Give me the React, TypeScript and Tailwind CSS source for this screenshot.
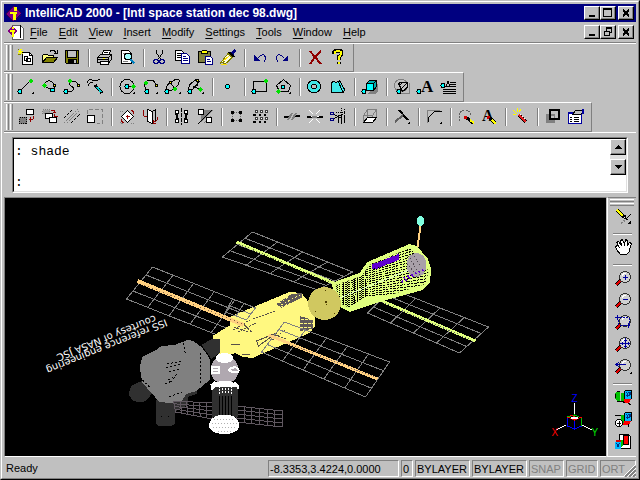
import React from "react";

type P = { children?: React.ReactNode };

const L = ({ d, s = "#000", f = "none", w = 1, dash }: { d: string; s?: string; f?: string; w?: number; dash?: string }) => (
  <path d={d} stroke={s} fill={f} strokeWidth={w} strokeDasharray={dash} />
);
const Cy = ({ x, y }: { x: number; y: number }) => <circle cx={x} cy={y} r={2} fill="#00ffff" stroke="#000" />;
const Gr = ({ x, y }: { x: number; y: number }) => (
  <path d={`M${x} ${y - 2.5}L${x + 2.5} ${y}L${x} ${y + 2.5}L${x - 2.5} ${y}Z`} fill="#00e000" />
);
const Ye = ({ x, y }: { x: number; y: number }) => (
  <rect x={x - 1} y={y - 1} width={2} height={2} fill="#ffff00" stroke="#000" />
);
const Fly = () => <path d="M20 15v3h-3z" fill="#000" />;

const icons: Record<string, React.ReactNode> = {
  New: <>
    <L d="M8.5 5.5h7l3 3v9h-10z" f="#fff" /><L d="M15.5 5.5v3h3" />
    <L d="M10.5 9.5h3v4h-3zM12.5 11.5h4v3h-4z" />
    <L d="M4 4.5h5M6.5 2v5M4 2l5 5M8 2l-4 5" s="#ffff00" /><L d="M4 7.5h3M4 2.5h1" s="#808000" />
  </>,
  Open: <>
    <L d="M5.5 15.5v-7l1-1h4l1 1h5v2" f="#ffff80" /><L d="M5.5 15.5l4-5h11l-4 5z" f="#808000" />
    <L d="M13 4.5q3-3 6 1M20 3v3.5h-3.5" />
  </>,
  Save: <>
    <L d="M5.5 3.5h13v13h-12l-1-1z" f="#808000" /><path d="M8 4h8v6H8z" fill="#c0c0c0" /><path d="M8 12h9v5H8z" fill="#000" />
    <path d="M14 13h2v3h-2z" fill="#c0c0c0" /><L d="M7.5 4v6.5h9V4" />
  </>,
  Print: <>
    <L d="M9.5 8.5l2-5h7l-2 5" f="#fff" /><L d="M12 5.5h4M11 7.5h4" />
    <L d="M5.5 10.5l3-3h11v5l-3 3h-11z" f="#c0c0c0" /><L d="M5.5 10.5h11v5M16.5 10.5l3-3M6 12.5h10" />
    <L d="M8.5 14.5h9l-1.5 3H8.5z" f="#fff" /><path d="M11 11h2v1h-2z" fill="#ff0" />
  </>,
  "Print Preview": <>
    <L d="M6.5 3.5h7l3 3v10h-10z" f="#fff" /><L d="M8 6.5h4M8 14.5h5" s="#808080" />
    <circle cx={13} cy={9.5} r={3.5} fill="#a0ffff" stroke="#000" /><L d="M15.5 12l4 4.5" s="#0080c0" w={2} />
  </>,
  Cut: <>
    <L d="M9.5 3v3l4 6M15.5 3v3l-4 6" /><circle cx={9} cy={14.5} r={2.3} fill="none" stroke="#000080" />
    <circle cx={15} cy={14.5} r={2.3} fill="none" stroke="#000080" />
  </>,
  Copy: <>
    <L d="M5.5 3.5h6l2 2v8h-8z" f="#fff" /><L d="M7 6.5h4M7 8.5h5M7 10.5h5" />
    <L d="M11.5 6.5h5l3 3v6.500h-8z" f="#fff" s="#000080" /><L d="M13 9.5h3M13 11.5h5M13 13.5h5" s="#000080" />
  </>,
  Paste: <>
    <L d="M5.5 4.5h12v11h-12z" f="#808040" /><L d="M8.5 6.5v-2l2-1.5h2l2 1.5v2z" f="#ffff00" />
    <L d="M12.5 9.5h5l2 2v6h-7z" f="#fff" s="#000080" /><L d="M14 12.5h3M14 14.5h4" s="#000080" />
  </>,
  "Match Properties": <>
    <L d="M16 7l3.5-4" s="#000080" w={3} /><L d="M12.5 5l6 5" w={2} />
    <L d="M12 6.5l4 4-5 5-4 2 1-3-4 2 4-5z" f="#ffffe0" s="#808000" /><L d="M5 17.5h6M7 14l6-5" s="#ffe000" />
  </>,
  Undo: <><L d="M10 11q3-4 6-3q3 3 0 7" s="#000080" /><path d="M6 8v6h6z" fill="#000080" /></>,
  Redo: <><L d="M13 11q-3-4-6-3q-3 3 0 7" s="#000080" /><path d="M17 8v6h-6z" fill="#000080" /></>,
  Delete: <><L d="M7 4l4 5 7 8M18 4q-6 5-11 13" s="#900000" w={2} /></>,
  Help: <>
    <L d="M8 7q0-3.500 4-3.500t3.500 3q0 2-3 3.500v3M12.5 15v2" w={4} /><L d="M8.5 7q0-3 3.500-3t3 2.500q0 2-2.500 3.500v3M12.5 15v2" s="#ffff00" w={2} />
  </>,
  Line: <><L d="M6 15L16 5" /><Cy x={6} y={15.5} /><Gr x={16.5} y={5} /><Fly /></>,
  Arc: <><L d="M7 9q2-5 6-4q5 1 4 8M7 10l8 4" /><Gr x={7} y={9.5} /><Ye x={17} y={9} /><Cy x={15.5} y={14} /></>,
  Polyline: <><L d="M6 15.5h5q5-2 1-5q-4-2-1-5h4q3 1 3 4" /><Cy x={6} y={15.5} /><Gr x={9.5} y={5} /><Ye x={18} y={9} /></>,
  Freehand: <><L d="M4 7q2-5 5-3t8-1M5 10q0-3 5-4" /><L d="M12 9l7 8" w={3} /><L d="M14 11l4 5" s="#00d0d0" w={2} /></>,
  Circle: <><circle cx={12} cy={10.5} r={7} fill="none" stroke="#000" /><L d="M12 10.500h6" /><Cy x={12} y={10.5} /><Gr x={18} y={10.5} /><Fly /></>,
  "Three Point Arc": <><L d="M8 13q-4-5 1-8q7-3 9 4" /><Gr x={8} y={7} /><Ye x={18} y={9} /><Cy x={9} y={15.5} /><Fly /></>,
  Ellipse: <><L d="M6 14q-2-4 4-8t8-2q1 4-4 8t-8 2M9 6l5 7" /><Ye x={9} y={6} /><Cy x={6} y={15.5} /><Gr x={14} y={13} /><Fly /></>,
  "Elliptical Arc": <><L d="M5 13q-1-4 4-7l4-3M7 15l9-10M13 4v6M9 10l6 3" /><Ye x={13} y={4} /><Gr x={16} y={13.5} /><Cy x={6} y={15.5} /><Fly /></>,
  Point: <Cy x={11.5} y={10.5} />,
  Rectangle: <><L d="M5.5 5.5h13v10h-13z" /><Cy x={6} y={15.5} /><Gr x={18} y={5} /></>,
  Polygon: <><L d="M12.5 3.5l7 6-2 6h-9l-3-6z" /><Cy x={12} y={11} /><Gr x={7.5} y={15.5} /><Fly /></>,
  Donut: <><circle cx={11} cy={10.5} r={6.5} fill="#40e8e8" stroke="#000" /><circle cx={11} cy={10.5} r={2.5} fill="#c0c0c0" stroke="#000" /></>,
  Plane: <><L d="M5.5 6.5l2-1 3 1 3-2 5 9-1 3h-12z" f="#40e8e8" /><L d="M12 5l5 11" /></>,
  Box: <><path d="M18 8h2v7l-3 3h-7z" fill="#808080" /><L d="M8.5 7.5l3-3h7v6l-3 4h-7z" f="#00b0b0" /><L d="M8.5 7.5h7v7h-7z" f="#00ffff" /><L d="M15.5 7.5l3-3" /><Cy x={6} y={15.5} /></>,
  Hatch: <><circle cx={11} cy={9.5} r={6.5} fill="none" stroke="#808080" /><L d="M9 17.5h10.500v-11" s="#808080" /><L d="M8.5 7.5l2-1h7v5l-5 4z" /><L d="M9 10l3-3M11 13l6-6M13 15l4-4" /><Cy x={9} y={15.5} /></>,
  Text: <><text x={8} y={16} fontSize={17} fontWeight={700} fontFamily="'Liberation Serif', serif">A</text><Cy x={6} y={15.5} /></>,
  "Multiline Text": <><L d="M14 6.5h6M14 8.5h6M15 10.5h5M7 13.5h13M7 15.5h13M7 17.5h13M8 10.5h7" /><L d="M10 11l2-6 2 6" /><Cy x={7} y={9.5} /></>,
  Move: <><L d="M12.5 3.5h7v5h-7z" f="#fff" /><path d="M5 11h8v7H5z" fill="#808080" /><L d="M5.5 11.500h7v6h-7z" dash="1 1" /><L d="M15 13.5h4M16.500 11v5M19 13V10" s="#900000" /></>,
  "Copy Objects": <><L d="M5.500 3.500h7v4h-7z" f="#a0a0a0" s="#808080" dash="1 1" /><L d="M8.500 7.500h7v5h-7z" f="#fff" /><L d="M12.500 11.500h7v5h-7z" f="#fff" /><L d="M14 4.500h3v2M17 7.500v3M15.500 6.500h3M18 10.500h3" s="#900000" /></>,
  Parallel: <><L d="M4 12l8-8M11 17l9-9" dash="3 1" /><L d="M4 17L18 3M7 17L19 5" s="#808080" dash="2 1" /></>,
  Scale: <><L d="M4.500 8v-4.500h15v14h-6" s="#808080" dash="4 2" /><L d="M4.500 9.500h7v7h-7z" f="#fff" /></>,
  Rotate: <><L d="M6.500 10.500l6-6 6 6-6 6z" f="#fff" /><L d="M5 5h4M16 17h4M5 16l3 2" s="#808080" dash="1 1" /><L d="M12.500 8.500v4M10.500 10.500h4M16 4q3 1 3 4M6 13q0 3 3 4" s="#900000" /></>,
  "Rotate 3D": <><L d="M9.500 3.500l5 2v12l-5-2z" f="#fff" /><L d="M14.500 5.500l3-2v11" /><L d="M5 4v4q0 3 4 3M19 11q2 3-3 5M18 17h-3v-3" s="#900000" /></>,
  Mirror: <><L d="M11.500 2v17" dash="4 1" /><L d="M5.500 4.500h3v3h-2v5h2v4h-3v-3h2v-5h-2zM17.500 4.500h-3v3h2v5h-2v4h3v-3h-2v-5h2z" f="#fff" /></>,
  "Mirror 3D": <><path d="M8 4h12L8 16zM9 18l9-9v5z" fill="#808080" /><circle cx={8} cy={6} r={3} fill="#fff" stroke="#000" /><circle cx={16} cy={14} r={3} fill="#fff" stroke="#000" /><L d="M5 18L19 4" /></>,
  Array: <><path d="M6 5h3v3H6zM14 5h3v3h-3zM6 13h3v3H6zM14 13h3v3h-3z" /><L d="M7.5 8v5M15.5 8v5M9 6.5h5M9 14.5h5" s="#606060" dash="1 1" /></>,
  "3D Array": <><path d="M5 8h3v2H5zM11 8h2v2h-2zM16 8h2v2h-2zM5 15h3v2H5zM11 15h2v2h-2zM16 15h2v2h-2z" /><L d="M7.5 4.5h2v2h-2zM12.500 4.500h2v2h-2zM17.500 4.500h2v2h-2zM7.500 11.500h2v2h-2zM12.500 11.500h2v2h-2zM17.500 11.500h2v2h-2z" f="#fff" s="#404040" /></>,
  Break: <><L d="M4 11h5M15 10h5" w={2} /><L d="M8 14l4-7M12 14l4-7" s="#808080" w={2} /></>,
  Join: <><L d="M4 10.500h16" w={2} /><L d="M6 4l4 4M17 4l-4 4M6 17l4-4M17 17l-4-4M8 10.500h8" s="#fff" /><L d="M9 11h5" s="#808080" w={2} /></>,
  Trim: <><L d="M7 13l10-5M7 8l8 4M12.500 9v8M15.500 9v9M18.500 9v8" /><L d="M10 6.500h10M15.500 2v5M18.500 3v5" dash="1 1" /><circle cx={6} cy={7.5} r={1.5} fill="none" stroke="#000080" /><circle cx={6} cy={13.5} r={1.5} fill="none" stroke="#000080" /></>,
  Extrude: <><L d="M5.5 9.5l4-6h9v8l-4 5h-9zM9.5 3.5v8M5.5 9.5h9v7M14.5 9.5l4-6" s="#808080" /><L d="M5.5 16.5l4-5h9l-4 5z" f="#fff" /></>,
  Extend: <><L d="M9 4l9 10" w={2} /><L d="M5 16l8-7" s="#606060" w={2} /><Fly /></>,
  Chamfer: <><L d="M5.500 17V4.500h12" s="#808080" /><L d="M6 16v-4l7-7h7" /><Fly /></>,
  "Edit Polyline": <><L d="M5 15V8q2-4 6-4 5 0 6 5" s="#606060" dash="2 1" /><path d="M10 10h3v3h-3z" fill="#d00000" /><L d="M13 12l6 5" w={3} /><L d="M16 14l4 3" s="#ffff00" w={2} /></>,
  "Edit Text": <><text x={5} y={15} fontSize={16} fontWeight={700} fontFamily="'Liberation Serif', serif">A</text><path d="M10 10h3v3h-3z" fill="#d00000" /><L d="M13 12l5 5" w={3} /><L d="M15 14l4 4" s="#ffff00" w={2} /></>,
  Explode: <><L d="M10 9l7 7" w={4} /><L d="M10 9l7 7" s="#e02020" w={2} /><L d="M11 8l6 7" s="#fff" dash="1 2" /><L d="M4 4l4 4M8 2v4M4 9l3-1M12 3l-2 3" s="#ffff00" /></>,
  "Draw Order": <><path d="M5 8h9v9H5z" fill="#808080" /><path d="M9 10h4v3H9z" fill="#c0c0c0" /><L d="M9 4h9v9H9z" w={2} /></>,
  Properties: <><L d="M4.500 6.500h13v11h-13z" f="#fff" s="#0000a0" /><path d="M4 6h8v2H4z" fill="#0000a0" /><L d="M6 11.500h2M10 11.500h5M6 13.500h2M10 13.500h5M6 15.500h2M10 15.500h5" /><L d="M9 8l3-4h6l1 2-2 2h-4z" f="#c0c0c0" /><path d="M18 3h2v5h-2z" fill="#0000a0" /></>,
  Sketch: <><L d="M6 4l7 7" w={4} /><L d="M6 4l6 6" s="#ffff00" w={2} /><path d="M11 11l3-2 1 4z" fill="#fff" stroke="#000" /><L d="M15 13l5-5M13 10l4 4" /><L d="M10 17l5-3" s="#808080" w={2} dash="2 1" /><path d="M20 14v4h-4z" /></>,
  Pan: <L d="M9.5 17.5l-4-5-1-3 2-1 2 2-3-5 2-1 3 4-1-5 2-1 2 5 1-5 2 1 0 5 2-3 2 1-2 6v2l-3 3z" f="#fff" />,
};

const lens = <><L d="M5 17l5-5" w={3} /><L d="M5 17l4-4" s="#e00000" w={2} /><circle cx={14} cy={9} r={5.5} fill="#d0d0d0" stroke="#303030" /><L d="M11 8q1-3 4-3" s="#fff" /></>;
const cam = <><path d="M14 4h7v8h-7z" fill="#00b8ff" /><L d="M15 5l5 6M18 5l2 3M15 8l3 3M20 5l-5 6M18 5l-3 3" s="#003080" dash="1 1" /><L d="M13.500 4v8M14 3.500h7M20.500 4v8" /><path d="M13 12h7l-2 4h-6z" fill="#ff0000" /><path d="M10 6h3v8h-3z" fill="#00c000" /></>;
Object.assign(icons, {
  "Zoom In": <>{lens}<L d="M12 9.500h5M14.500 7v5" s="#0000a0" /></>,
  "Zoom Out": <>{lens}<L d="M12 9.500h5" s="#0000a0" /></>,
  "Zoom Window": <>{lens}<L d="M4 5.500h5M6.500 3v5" s="#0000a0" /><L d="M14 13.500h6M17.500 11v5M9 5.500h9v7M7.500 8v5h7" s="#0000a0" dash="2 1" /></>,
  "Zoom Extents": <>{lens}<L d="M9 9.500h10M14.500 4v10M11.500 8v3M17.500 8v3M13 6.500h3M13 12.500h3" s="#0000a0" /></>,
  "Zoom Previous": <>{lens}<L d="M5 8.500h10M8 6l-3 2.500 3 2.500" s="#0000a0" /><path d="M21 15v3h-3z" /></>,
  Render: <>{cam}<path d="M4 9q0-5 5-5v10q-5 0-5-5z" fill="#00c000" /><L d="M4.500 7v4M6 5l3-1M6 14h5l3 2M17 16l3 2" /></>,
  Lights: <>{cam}<L d="M4 6.500h6M17 15v3" /><circle cx={8} cy={14} r={3.5} fill="#fff" stroke="#000" /><L d="M6 14.500h4M8.500 12v5" /></>,
  Materials: <><path d="M8 3h9l2 2v12H8z" fill="#fff" stroke="#000" /><path d="M12 4h5v9h-5z" fill="#ff0000" stroke="#000" /><path d="M4 11h6v7H4z" fill="#00b8ff" /><L d="M5 12l4 5M9 12l-4 5" s="#003080" dash="1 1" /><path d="M10 9h2v5l-2 3z" fill="#00c000" /><path d="M5 9h5v2H5z" fill="#e00000" /></>,
});

const Tool = ({ name }: { name: string }) => (
  <button type="button" aria-label={name} title={name} className="flex h-[22px] w-[23px] shrink-0 items-center justify-center">
    <svg width="23" height="22" viewBox="0 0 23 22" shapeRendering="crispEdges" aria-hidden="true">{icons[name]}</svg>
  </button>
);

const Bar = ({ groups, first }: { groups: string[][]; first?: boolean }) => (
  <div role="toolbar" className={`flex w-fit items-stretch border-r border-b border-r-[#808080] border-b-[#808080] ${first ? "h-[28px]" : "h-[30px] border-t border-t-white"}`}>
    <div className="flex shrink-0 gap-px py-px pr-px pl-0.5">
      <i className="w-[3px] border-r border-l border-r-[#808080] border-l-white" />
      <i className="w-[3px] border-r border-l border-r-[#808080] border-l-white" />
    </div>
    <div className="flex items-center pr-1">
      {groups.map((g, i) => (
        <React.Fragment key={i}>
          {i > 0 && <i className="mr-0.5 ml-[5px] h-[18px] w-0.5 shrink-0 border-r border-l border-r-white border-l-[#808080]" />}
          {g.map((n) => <Tool key={n} name={n} />)}
        </React.Fragment>
      ))}
    </div>
  </div>
);

const bevel = "border border-t-white border-l-white border-r-black border-b-black bg-[#c0c0c0] shadow-[inset_-1px_-1px_0_#808080]";

const WinBtn = ({ label, children }: P & { label: string }) => (
  <button type="button" aria-label={label} className={`flex h-[14px] w-4 items-center justify-center ${bevel}`}>
    <svg width="12" height="10" viewBox="0 0 12 10" shapeRendering="crispEdges" aria-hidden="true">{children}</svg>
  </button>
);
const WinButtons = ({ child }: { child?: boolean }) => (
  <div className="flex pr-0.5">
    <WinBtn label="Minimize"><path d="M3 7h6v2H3z" /></WinBtn>
    {child ? (
      <WinBtn label="Restore"><L d="M4.500 4V1.500h5v4H8" /><L d="M4 1h6" w={2} /><L d="M2.500 4.500h5v4h-5zM2 4h6" /></WinBtn>
    ) : (
      <WinBtn label="Maximize"><L d="M1.500 1.500h8v7h-8z" /><path d="M1 0h9v2H1z" /></WinBtn>
    )}
    <span className="w-0.5" />
    <WinBtn label="Close"><L d="M3 1.500l6 7M9 1.500l-6 7" w={2} /></WinBtn>
  </div>
);

const Logo = ({ size }: { size: number }) => (
  <svg width={size} height={size} viewBox="0 0 16 16" shapeRendering="crispEdges" aria-hidden="true">
    <path d="M8 0l8 8-8 8-8-8z" fill="#800080" stroke="#400040" />
    <path d="M8 1h4v4H8zM4 6h8v3h-1v6H7V9H4z" fill="#ffff00" />
  </svg>
);

type Pt = [number, number];
const mix = (a: Pt, b: Pt, t: number): Pt => [a[0] + (b[0] - a[0]) * t, a[1] + (b[1] - a[1]) * t];
const Mesh = ({ q, nu, nv, color = "#808080" }: { q: [Pt, Pt, Pt, Pt]; nu: number; nv: number; color?: string }) => {
  const seg = (a: Pt, b: Pt) => `M${a[0]} ${a[1]}L${b[0]} ${b[1]}`;
  let d = "";
  for (let i = 0; i <= nu; i++) d += seg(mix(q[0], q[1], i / nu), mix(q[3], q[2], i / nu));
  for (let j = 0; j <= nv; j++) d += seg(mix(q[0], q[3], j / nv), mix(q[1], q[2], j / nv));
  return <path d={d} stroke={color} fill="none" />;
};

const hull = "M332 283L360 273 368 262 410 244 417 246 428 258 432 270 430 283 423 290 380 302 350 312 337 305Z";
const meshLines = Array.from({ length: 17 }, (_, i) => `M336 ${283 + i * 2}L366 ${264 + i * 2}L432 ${242 + i * 3}`).join("");

const Station = () => (
  <svg className="block h-full w-full" viewBox="5 198 602 258" preserveAspectRatio="xMidYMid slice" shapeRendering="crispEdges" role="img" aria-label="Space station model">
    <Mesh q={[[253, 232], [353, 272], [318, 290], [223, 257]]} nu={4} nv={4} />
    <Mesh q={[[392, 289], [489, 327], [460, 353], [368, 313]]} nu={4} nv={4} />
    <L d="M237 242L334 283" s="#e0ff7e" w={3} /><L d="M240 244L334 284" s="#607030" dash="1 2" />
    <L d="M380 300L476 341" s="#e0ff7e" w={3} /><L d="M380 301L470 339" s="#606060" dash="1 2" />
    <Mesh q={[[153, 267], [256, 308], [233, 341], [127, 299]]} nu={5} nv={4} />

    <path d={hull} fill="#e0ff7e" />
    <clipPath id="hull"><path d="M336 285L362 276 370 265 410 248 424 259 429 272 426 284 378 299 350 308 340 303Z" /></clipPath>
    <g clipPath="url(#hull)">
      <path d={meshLines} stroke="#000" fill="none" strokeDasharray="3 1 2 1" />
      <L d="M350 279l9 28M364 271l9 29M380 262l11 34M396 254l11 34" s="#e0ff7e" />
      <L d="M340 298L412 269" s="#e0ffc0" />
    </g>
    <ellipse cx={417} cy={265} rx={10} ry={12} fill="#a8a0a8" />
    <L d="M409 256l12 20M413 254l12 18M408 264l10 13" s="#504850" dash="1 2" />
    <L d="M404 278l20-8M402 282l12-6" s="#6000d0" w={2} dash="2 2" />
    <path d="M372 264l5 -1 22-9v6l-22 9h-4z" fill="#6000d0" /><L d="M373 264l26-10M375 269l22-8" dash="1 3" />
    <L d="M418 247L421 226" s="#ffd080" w={2} /><ellipse cx={421} cy={221} rx={4} ry={5} fill="#80ffe0" />

    <path d="M213 336L231 325 230 317 290 292 302 293 310 303 316 317 315 327 310 333 253 358 243 357 236 353 222 357 216 348Z" fill="#fff880" />
    <path d="M277 304l15-10 10-1 1 4-21 11z" fill="#605858" /><L d="M278 307l22-12M282 307l20-8M280 303l10-7" s="#fff880" dash="2 2" />
    <path d="M300 316l14 4-1 9-13 2z" fill="#605858" /><L d="M301 319h12M300 323h14M300 327h12" s="#fff880" dash="3 1" />
    <L d="M234 330l16-10M239 332l17-9M244 324l8 8M235 327l14 5M254 319l21-8M273 340l12-10M276 335l10 4" s="#585048" dash="2 1" />
    <L d="M257 341l20-8-18 13zM242 354l8 1M231 344h9" s="#585048" />
    <Mesh q={[[233, 299], [256, 308], [247, 320], [226, 312]]} nu={2} nv={2} />
    <Mesh q={[[285, 322], [390, 362], [366, 397], [262, 352]]} nu={5} nv={4} />
    <L d="M138 281L244 325" s="#ffd080" w={4} /><L d="M145 285L248 326" s="#806040" dash="1 3" />
    <L d="M269 335L378 379" s="#ffd080" w={3} /><L d="M290 344L375 377" s="#806860" dash="1 2" />
    <circle cx={325} cy={303.5} r={16.5} fill="#d0c860" /><path d="M325 301h2v2h-2zM326 304h1v1h-1zM325 290h1v1h-1zM315 311h1v1h-1zM334 313h1v1h-1z" fill="#504000" />

    <path d="M202 345l10-6h9l-1 14-8 6z" fill="#303030" />
    <path d="M145 380l10 11-9 10q-11 4-16-5-1-10 5-12zM156 400h19l13-5v10l-13 7v12l-4 2h-12l-3-3zM185 390l14-4-2 8-12 4z" fill="#303030" />
    <path d="M140 367L143 357 158 349 162 346 175 345 188 340 194 341 202 347 208 355 211 361 210 380 197 391 187 394 182 401 170 403 160 402 152 393 143 383Z" fill="#808080" />
    <L d="M168 364l14-3M167 368l15-4M170 372l11-3M169 380l4-3M166 384l6-3M184 343l2 12M201 353v30M143 380l8 8M170 397l12-5M177 374l-6 9" dash="2 2" />
    <path d="M161 416h1v1h-1zM168 416h1v1h-1z" />

    <Mesh q={[[174, 401], [213, 403], [213, 419], [176, 412]]} nu={6} nv={4} color="#605860" />
    <Mesh q={[[237, 406], [283, 411], [283, 427], [237, 422]]} nu={6} nv={4} color="#605860" />
    <ellipse cx={225} cy={370} rx={14} ry={14} fill="#b0a8b0" /><ellipse cx={225} cy={358} rx={9} ry={5} fill="#fff" />
    <L d="M212.500 366.500h7v6h-7zM212 369.500h7M231 368q7-2 8 2t-9 1q-1-3 4-3" s="#fff" w={2} />
    <path d="M212 388q2-6 9-7l8 0q8 1 9 7z" fill="#fff" />
    <path d="M212 387h26v30h-26z" fill="#303030" />
    <L d="M219.500 386v9M222.500 385v9M225.500 385v9M228.500 385v9M231.500 386v9" s="#fff" dash="2 1" />
    <L d="M219.500 396v20M222.500 396v20M225.500 396v20M228.500 396v20M231.500 396v20" />
    <path d="M209 427q1-11 12-12h9q9 1 10 12-3 7-15 7t-16-7z" fill="#fff" />
    <L d="M214 419h20M212 423h25M213 427h24M218 431h15" s="#b0b0b0" dash="1 2" />
    <L d="M215 387l-3 2v-4l4-3M235 382l3 3v4" s="#fff" w={2} />

    <g fill="#fff" fontFamily="'DejaVu Sans', sans-serif" fontSize={10}>
      <text transform="translate(166 319) rotate(158)">ISS reference engineering</text>
      <text transform="translate(155 315) rotate(158)">courtesy of NASA JSC</text>
    </g>

    <L d="M574.500 403v16M583 425l9 5M566 425l-9 5" s="#fff" />
    <L d="M568 417l7-2 7 3v8l-7 3-7-3z" s="#00c000" />
    <L d="M568 417v9l7 3v-8M575 421v8l7-3" s="#0000ff" /><L d="M568 417l7 3 7-3M571 415l7 3" s="#ff0000" />
    <L d="M571 418h7" s="#fff" w={2} />
    <g fontFamily="'Liberation Sans', sans-serif" fontSize={10}>
      <text x={572} y={402} fill="#0000ff">Z</text><text x={552} y={436} fill="#ff0000">X</text><text x={592} y={436} fill="#00e000">Y</text>
    </g>
  </svg>
);

const VSep = () => <i className="mt-[5px] mb-0.5 h-0.5 w-[19px] border-t border-b border-t-[#808080] border-b-white" />;
const cell = "flex h-[17px] shrink-0 items-center border border-t-[#808080] border-l-[#808080] border-r-white border-b-white pl-px whitespace-nowrap";

const menus = ["File", "Edit", "View", "Insert", "Modify", "Settings", "Tools", "Window", "Help"];

export default function App() {
  return (
    <div className="flex h-screen flex-col border border-t-[#c0c0c0] border-l-[#c0c0c0] border-r-black border-b-black bg-[#c0c0c0] font-['Liberation_Sans',Arial,sans-serif] text-[11px] leading-4 text-black">
      <div className="flex min-h-0 flex-1 flex-col border border-t-white border-l-white border-r-[#808080] border-b-[#808080] px-0.5 pt-0.5">
        <header className="flex h-[18px] shrink-0 items-center bg-[#000080] text-white">
          <span className="mr-1 ml-0.5"><Logo size={15} /></span>
          <h1 className="min-w-0 flex-1 truncate text-[12px] font-bold">IntelliCAD 2000 - [Intl space station dec 98.dwg]</h1>
          <WinButtons />
        </header>
        <nav className="flex h-[21px] shrink-0 items-center border-b border-[#808080]">
          <svg className="mr-1.5 ml-1 shrink-0" width="16" height="16" viewBox="0 0 16 16" shapeRendering="crispEdges" aria-hidden="true">
            <L d="M4.500 1.500h8l3 3v11h-11z" f="#fff" s="#606060" /><L d="M12.500 1v13" />
            <path d="M4 2l5 5-5 5-4-5z" fill="#800080" /><path d="M4 3h2v2H4zM2 6h5v2H6v5H4V8H2z" fill="#ffff00" />
          </svg>
          <div className="flex flex-1 gap-[11px]">
            {menus.map((m) => (
              <button type="button" key={m}>
                <span className="underline underline-offset-2">{m[0]}</span>{m.slice(1)}
              </button>
            ))}
          </div>
          <WinButtons child />
        </nav>

        <div className="shrink-0 border-t border-b border-white">
          <Bar first groups={[["New", "Open", "Save"], ["Print", "Print Preview"], ["Cut", "Copy", "Paste", "Match Properties"], ["Undo", "Redo"], ["Delete", "Help"]]} />
          <Bar groups={[["Line", "Arc", "Polyline", "Freehand"], ["Circle", "Three Point Arc", "Ellipse", "Elliptical Arc"], ["Point"], ["Rectangle", "Polygon"], ["Donut", "Plane"], ["Box"], ["Hatch", "Text", "Multiline Text"]]} />
          <Bar groups={[["Move", "Copy Objects", "Parallel", "Scale"], ["Rotate", "Rotate 3D"], ["Mirror", "Mirror 3D"], ["Array", "3D Array"], ["Break", "Join", "Trim"], ["Extrude"], ["Extend"], ["Chamfer"], ["Edit Polyline", "Edit Text"], ["Explode"], ["Draw Order", "Properties"]]} />
        </div>

        <section aria-label="Command line" className="mx-2 mt-1 mb-1 flex h-[56px] shrink-0 border border-t-[#808080] border-l-[#808080] border-r-white border-b-white">
          <div className="flex min-w-0 flex-1 border border-t-black border-l-black border-r-[#dfdfdf] border-b-[#dfdfdf] bg-white">
            <div className="flex min-w-0 flex-1 flex-col justify-between pt-[5px] pl-px font-['Liberation_Mono',monospace] text-[13px]">
              <p className="whitespace-pre">: shade</p>
              <div className="flex">
                <label htmlFor="cmd">:</label>
                <input id="cmd" className="h-4 min-w-0 flex-1 outline-none" />
              </div>
            </div>
            <div className="flex w-4 flex-col">
              <button type="button" aria-label="Scroll up" className={`flex h-4 items-center justify-center ${bevel}`}>
                <svg width="7" height="4" viewBox="0 0 7 4" shapeRendering="crispEdges"><path d="M3 0h1l3 4H0z" /></svg>
              </button>
              <i className="h-1 bg-[#dfdfdf]" />
              <button type="button" aria-label="Scroll down" className={`flex h-4 items-center justify-center ${bevel}`}>
                <svg width="7" height="4" viewBox="0 0 7 4" shapeRendering="crispEdges"><path d="M0 0h7L4 4H3z" /></svg>
              </button>
            </div>
          </div>
        </section>

        <div className="flex min-h-0 flex-1">
          <main className="min-w-0 flex-1 border border-t-[#808080] border-l-[#808080] border-r-[#c0c0c0] border-b-white bg-black">
            <Station />
          </main>
          <aside role="toolbar" aria-label="View tools" className="flex w-[29px] shrink-0 flex-col items-center border-t border-b border-l border-t-[#808080] border-b-white border-l-white">
            <div className="flex w-full flex-col gap-px px-0.5 pt-px">
              <i className="h-[3px] border-t border-b border-t-white border-b-[#808080]" />
              <i className="h-[3px] border-t border-b border-t-white border-b-[#808080]" />
            </div>
            <Tool name="Sketch" /><VSep /><Tool name="Pan" /><VSep />
            <Tool name="Zoom In" /><Tool name="Zoom Out" /><Tool name="Zoom Window" /><Tool name="Zoom Extents" /><Tool name="Zoom Previous" />
            <VSep /><Tool name="Render" /><Tool name="Lights" /><Tool name="Materials" />
          </aside>
        </div>

        <footer className="flex h-[21px] shrink-0 items-start gap-0.5 pt-[3px]">
          <span className="min-w-0 flex-1 pl-0.5">Ready</span>
          <output className={`${cell} w-[131px]`}>-8.3353,3.4224,0.0000</output>
          <span className={`${cell} w-3`}>0</span>
          <span className={`${cell} w-[55px]`}>BYLAYER</span>
          <span className={`${cell} w-[55px]`}>BYLAYER</span>
          <button type="button" className={`${cell} w-[35px] text-[#808080]`}>SNAP</button>
          <button type="button" className={`${cell} w-8 text-[#808080]`}>GRID</button>
          <div className="relative">
            <button type="button" className={`${cell} w-[36px] text-[#808080]`}>ORT</button>
            <svg className="absolute right-0 bottom-0" width="12" height="13" viewBox="0 0 12 13" aria-hidden="true">
              <L d="M1 13L12 2M5 13l7-7M9 13l3-3" s="#808080" w={2} /><L d="M0 12L12 0M4 12l8-8M8 12l4-4" s="#fff" />
            </svg>
          </div>
        </footer>
      </div>
    </div>
  );
}
